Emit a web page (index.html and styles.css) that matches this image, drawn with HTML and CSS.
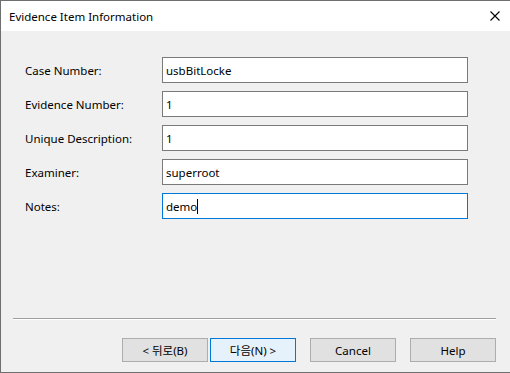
FILE: index.html
```html
<!DOCTYPE html>
<html lang="ko">
<head>
  <meta charset="UTF-8">
  <title>Evidence Item Information</title>
  <link rel="stylesheet" href="styles.css">
</head>
<body>
  <div class="dialog">
    <div class="title-bar">
      <span class="title">Evidence Item Information</span>
      <svg class="close" width="10" height="10" viewBox="0 0 10 10">
        <path d="M0.5 0.5 L9.5 9.5 M9.5 0.5 L0.5 9.5" stroke="#000" stroke-width="1.1" fill="none"/>
      </svg>
    </div>
    <div class="content">
      <form class="fields">
        <label class="row">
          <span class="label">Case Number:</span>
          <span class="input">usbBitLocke</span>
        </label>
        <label class="row">
          <span class="label">Evidence Number:</span>
          <span class="input">1</span>
        </label>
        <label class="row">
          <span class="label">Unique Description:</span>
          <span class="input">1</span>
        </label>
        <label class="row">
          <span class="label">Examiner:</span>
          <span class="input">superroot</span>
        </label>
        <label class="row">
          <span class="label">Notes:</span>
          <span class="input focused">demo<span class="caret"></span></span>
        </label>
      </form>
      <div class="separator"></div>
      <div class="buttons">
        <button type="button" class="btn">&lt; 뒤로(B)</button>
        <button type="button" class="btn default">다음(N) &gt;</button>
        <button type="button" class="btn spaced">Cancel</button>
        <button type="button" class="btn spaced">Help</button>
      </div>
    </div>
  </div>
</body>
</html>
```

FILE: styles.css
```css
/* Okno dialogowe */
body {
  margin: 0;
  padding: 0;
  background-color: #f0f0f0;
  font-family: "Noto Sans", "Noto Sans CJK KR", sans-serif;
  font-size: 11.5px;
  color: #000;
}
.dialog {
  width: 510px;
  height: 373px;
  box-sizing: border-box;
  border: 1px solid #6f6f6f;
  border-right: none;
  display: flex;
  flex-direction: column;
  background-color: #f0f0f0;
}
.title-bar {
  height: 30px;
  background-color: #fff;
  display: flex;
  align-items: center;
  justify-content: space-between;
  padding: 0 10px 0 8px;
}
.title {
  font-size: 11.5px;
}
.close {
  display: block;
}
/* Pola formularza */
.content {
  flex: 1;
  display: flex;
  flex-direction: column;
}
.fields {
  margin: 26px 0 0 0;
  display: flex;
  flex-direction: column;
  gap: 8px;
}
.row {
  display: flex;
  align-items: center;
  height: 26px;
}
.label {
  width: 137px;
  padding-left: 24px;
}
.input {
  box-sizing: border-box;
  width: 306px;
  height: 26px;
  border: 1px solid #7a7a7a;
  background-color: #fff;
  padding: 0 3px;
  display: flex;
  align-items: center;
}
.input.focused {
  border-color: #0078d7;
}
.caret {
  display: inline-block;
  width: 1px;
  height: 15px;
  background-color: #000;
}
/* Linia i przyciski */
.separator {
  margin: 99px 14px 0 12px;
  height: 1px;
  background-color: #a0a0a0;
  border-bottom: 1px solid #fff;
}
.buttons {
  display: flex;
  justify-content: flex-end;
  gap: 2px;
  padding: 18px 14px 0 0;
}
.btn {
  width: 86px;
  height: 24px;
  box-sizing: border-box;
  border: 1px solid #adadad;
  background-color: #e1e1e1;
  font-family: inherit;
  font-size: 11.5px;
  color: #000;
  padding: 0;
}
.btn.default {
  border-color: #0078d7;
  background-color: #e5f1fb;
}
.btn.spaced {
  margin-left: 12px;
}
```
